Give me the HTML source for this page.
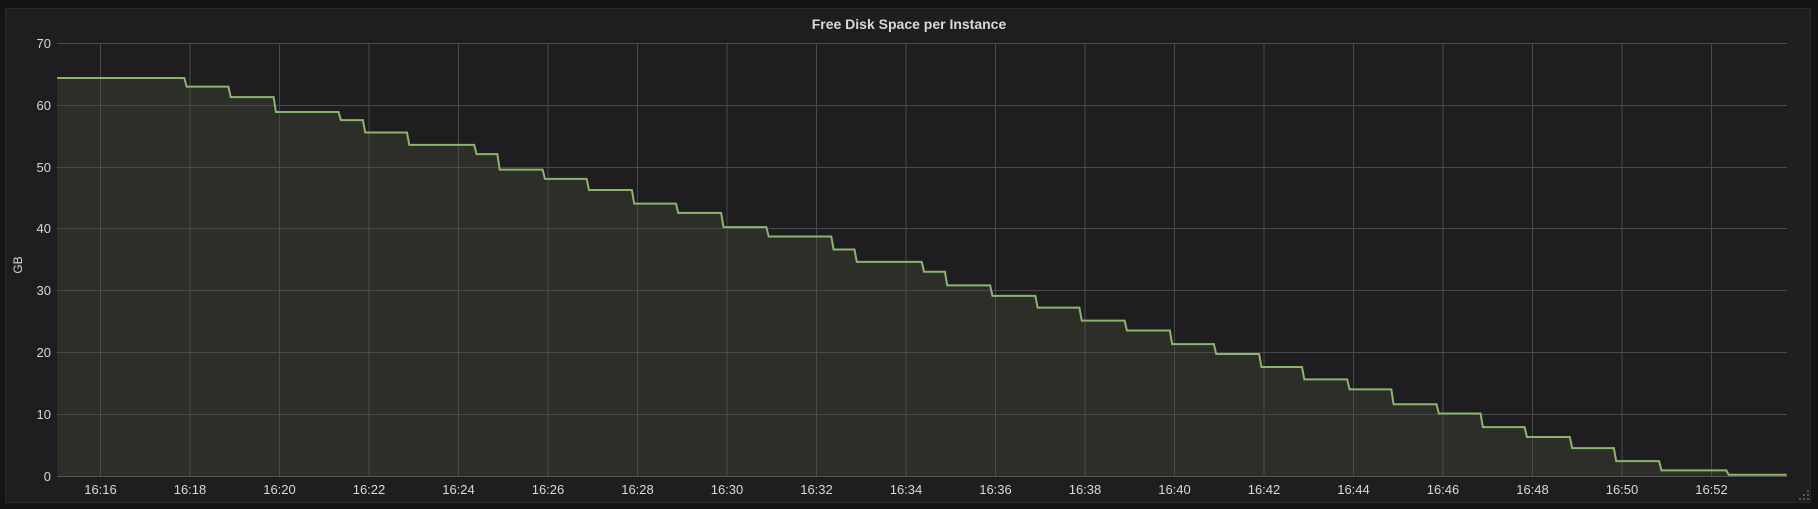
<!DOCTYPE html>
<html><head><meta charset="utf-8"><style>
html,body{margin:0;padding:0;background:#141414;}
body{width:1818px;height:509px;overflow:hidden;position:relative;font-family:"Liberation Sans",sans-serif;}
.panel{position:absolute;left:5px;top:8px;width:1806px;height:495px;background:#1f1d1f;border:1px solid #292929;box-sizing:border-box;}
</style></head><body>
<div class="panel"></div>
<svg width="1818" height="509" style="position:absolute;left:0;top:0" xmlns="http://www.w3.org/2000/svg">
<text x="909" y="29" text-anchor="middle" fill="#d8d9da" font-size="14" font-weight="bold" font-family="Liberation Sans">Free Disk Space per Instance</text>
<g transform="matrix(1.1594 0 0 -6.19 0 476)">
<polygon fill="#2d2e28" points="49.2,0 49.2,64.3 159,64.3 161,62.9 197,62.9 199,61.2 236,61.2 238,58.8 292,58.8 294,57.5 313,57.5 315,55.5 351,55.5 353,53.5 409,53.5 411,52 429,52 431,49.5 468,49.5 470,48 506,48 508,46.2 545,46.2 547,44 583,44 585,42.5 622,42.5 624,40.2 661,40.2 663,38.7 717,38.7 719,36.6 737,36.6 739,34.6 795,34.6 797,33 815,33 817,30.8 854,30.8 856,29.1 893,29.1 895,27.2 931,27.2 933,25.1 970,25.1 972,23.5 1009,23.5 1011,21.3 1047,21.3 1049,19.7 1086,19.7 1088,17.6 1123,17.6 1125,15.6 1162,15.6 1164,14 1200,14 1202,11.6 1239,11.6 1241,10.1 1277,10.1 1279,7.9 1315,7.9 1317,6.3 1354,6.3 1356,4.5 1392,4.5 1394,2.4 1431,2.4 1433,0.9 1489,0.9 1491,0.2 1541,0.2 1541,0"/>
</g>
<g stroke="#4a4a4a" stroke-width="1">
<line x1="57" y1="43.5" x2="1787" y2="43.5"/><line x1="57" y1="105.5" x2="1787" y2="105.5"/><line x1="57" y1="167.5" x2="1787" y2="167.5"/><line x1="57" y1="228.5" x2="1787" y2="228.5"/><line x1="57" y1="290.5" x2="1787" y2="290.5"/><line x1="57" y1="352.5" x2="1787" y2="352.5"/><line x1="57" y1="414.5" x2="1787" y2="414.5"/>
<line x1="100.5" y1="43" x2="100.5" y2="476"/><line x1="190" y1="43" x2="190" y2="476"/><line x1="279.5" y1="43" x2="279.5" y2="476"/><line x1="369" y1="43" x2="369" y2="476"/><line x1="458.5" y1="43" x2="458.5" y2="476"/><line x1="548" y1="43" x2="548" y2="476"/><line x1="637.5" y1="43" x2="637.5" y2="476"/><line x1="727" y1="43" x2="727" y2="476"/><line x1="816.5" y1="43" x2="816.5" y2="476"/><line x1="906" y1="43" x2="906" y2="476"/><line x1="995.5" y1="43" x2="995.5" y2="476"/><line x1="1085" y1="43" x2="1085" y2="476"/><line x1="1174.5" y1="43" x2="1174.5" y2="476"/><line x1="1264" y1="43" x2="1264" y2="476"/><line x1="1353.5" y1="43" x2="1353.5" y2="476"/><line x1="1443" y1="43" x2="1443" y2="476"/><line x1="1532.5" y1="43" x2="1532.5" y2="476"/><line x1="1622" y1="43" x2="1622" y2="476"/><line x1="1711.5" y1="43" x2="1711.5" y2="476"/>
</g>
<line x1="57" y1="476.5" x2="1787" y2="476.5" stroke="#555"/>
<g transform="matrix(1.1594 0 0 -6.19 0 476)">
<polyline fill="none" stroke="#8ab56f" stroke-width="2" vector-effect="non-scaling-stroke" points="49.2,64.3 159,64.3 161,62.9 197,62.9 199,61.2 236,61.2 238,58.8 292,58.8 294,57.5 313,57.5 315,55.5 351,55.5 353,53.5 409,53.5 411,52 429,52 431,49.5 468,49.5 470,48 506,48 508,46.2 545,46.2 547,44 583,44 585,42.5 622,42.5 624,40.2 661,40.2 663,38.7 717,38.7 719,36.6 737,36.6 739,34.6 795,34.6 797,33 815,33 817,30.8 854,30.8 856,29.1 893,29.1 895,27.2 931,27.2 933,25.1 970,25.1 972,23.5 1009,23.5 1011,21.3 1047,21.3 1049,19.7 1086,19.7 1088,17.6 1123,17.6 1125,15.6 1162,15.6 1164,14 1200,14 1202,11.6 1239,11.6 1241,10.1 1277,10.1 1279,7.9 1315,7.9 1317,6.3 1354,6.3 1356,4.5 1392,4.5 1394,2.4 1431,2.4 1433,0.9 1489,0.9 1491,0.2 1541,0.2"/>
</g>
<g fill="#d8d9da" font-size="13" font-family="Liberation Sans" text-anchor="end">
<text x="51" y="48">70</text><text x="51" y="110">60</text><text x="51" y="172">50</text><text x="51" y="233">40</text><text x="51" y="295">30</text><text x="51" y="357">20</text><text x="51" y="419">10</text><text x="51" y="481">0</text>
</g>
<text transform="translate(22,265) rotate(-90)" text-anchor="middle" fill="#d8d9da" font-size="12" font-family="Liberation Sans">GB</text>
<g fill="#d8d9da" font-size="13" font-family="Liberation Sans" text-anchor="middle">
<text x="100.5" y="494">16:16</text><text x="190" y="494">16:18</text><text x="279.5" y="494">16:20</text><text x="369" y="494">16:22</text><text x="458.5" y="494">16:24</text><text x="548" y="494">16:26</text><text x="637.5" y="494">16:28</text><text x="727" y="494">16:30</text><text x="816.5" y="494">16:32</text><text x="906" y="494">16:34</text><text x="995.5" y="494">16:36</text><text x="1085" y="494">16:38</text><text x="1174.5" y="494">16:40</text><text x="1264" y="494">16:42</text><text x="1353.5" y="494">16:44</text><text x="1443" y="494">16:46</text><text x="1532.5" y="494">16:48</text><text x="1622" y="494">16:50</text><text x="1711.5" y="494">16:52</text>
</g>
<g fill="#555">
<rect x="1807" y="494" width="2" height="2"/><rect x="1807" y="498" width="2" height="2"/><rect x="1803" y="498" width="2" height="2"/><rect x="1807" y="490" width="2" height="2"/><rect x="1803" y="494" width="2" height="2"/><rect x="1799" y="498" width="2" height="2"/>
</g>
</svg>
</body></html>
